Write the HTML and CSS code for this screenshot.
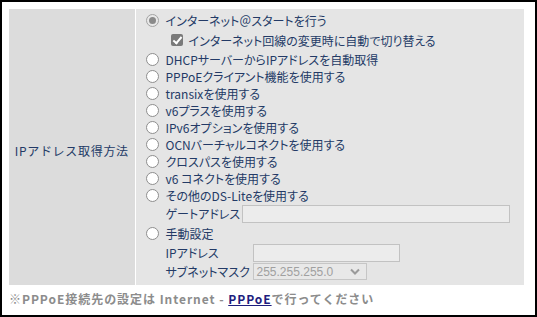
FILE: index.html
```html
<!DOCTYPE html>
<html lang="ja">
<head>
  <meta charset="UTF-8">
  <title>IPアドレス取得方法</title>
  <link rel="stylesheet" href="styles.css">
</head>
<body>
  <div class="frame">
    <table class="setting">
      <tr>
        <th>IPアドレス取得方法</th>
        <td>
          <div class="opt"><span class="radio on"></span>インターネット＠スタートを行う</div>
          <div class="opt sub"><span class="check"></span>インターネット回線の変更時に自動で切り替える</div>
          <div class="opt"><span class="radio"></span>DHCPサーバーからIPアドレスを自動取得</div>
          <div class="opt"><span class="radio"></span>PPPoEクライアント機能を使用する</div>
          <div class="opt"><span class="radio"></span>transixを使用する</div>
          <div class="opt"><span class="radio"></span>v6プラスを使用する</div>
          <div class="opt"><span class="radio"></span>IPv6オプションを使用する</div>
          <div class="opt"><span class="radio"></span>OCNバーチャルコネクトを使用する</div>
          <div class="opt"><span class="radio"></span>クロスパスを使用する</div>
          <div class="opt"><span class="radio"></span>v6 コネクトを使用する</div>
          <div class="opt"><span class="radio"></span>その他のDS-Liteを使用する</div>
          <div class="field gate"><label>ゲートアドレス</label><span class="text wide"></span></div>
          <div class="opt manual"><span class="radio"></span>手動設定</div>
          <div class="field"><label>IPアドレス</label><span class="text"></span></div>
          <div class="field mask">
            <label>サブネットマスク</label>
            <span class="select">255.255.255.0
              <svg width="10" height="7" viewBox="0 0 10 7"><path d="M1 1.5 L5 5.5 L9 1.5" fill="none" stroke="#9a9a9a" stroke-width="2"/></svg>
            </span>
          </div>
        </td>
      </tr>
    </table>
    <p class="note">※PPPoE接続先の設定は Internet - <a href="#">PPPoE</a>で行ってください</p>
  </div>
</body>
</html>
```

FILE: styles.css
```css
* {
  margin: 0;
  padding: 0;
  box-sizing: border-box;
}
body {
  width: 537px;
  height: 317px;
  font-family: "Noto Sans CJK JP", "Noto Sans", sans-serif;
  font-size: 12px;
  color: #233a66;
}
.frame {
  width: 537px;
  height: 317px;
  border: 2px solid #000;
  padding: 7px;
}
.setting {
  width: 515px;
  border-collapse: collapse;
}
.setting th {
  width: 126px;
  background: #dcdcdc;
  border-right: 1px solid #fff;
  font-weight: normal;
  text-align: center;
  letter-spacing: 0.7px;
  padding-top: 6px;
}
.setting td {
  background: #e5e5e5;
  padding: 3px 0 4px 10px;
  font-feature-settings: "palt";
}
.opt {
  display: flex;
  align-items: center;
  height: 17px;
  white-space: nowrap;
}
.opt.sub {
  height: 22px;
  padding-left: 25px;
}
.radio {
  width: 13px;
  height: 13px;
  margin-right: 7px;
  border: 1px solid #8e8e8e;
  border-radius: 50%;
  background: #fff;
  display: flex;
  align-items: center;
  justify-content: center;
}
.radio.on {
  border-color: #a3a3a3;
  background: #e8e8e8;
}
.radio.on::after {
  content: "";
  width: 7px;
  height: 7px;
  border-radius: 50%;
  background: #8a8a8a;
}
.check {
  width: 12px;
  height: 12px;
  margin-right: 6px;
  border-radius: 2px;
  background: #7a7a7a;
  position: relative;
}
.check::after {
  content: "";
  position: absolute;
  left: 4px;
  top: 1px;
  width: 3px;
  height: 7px;
  border: solid #fff;
  border-width: 0 2px 2px 0;
  transform: rotate(40deg);
}
.field {
  display: flex;
  align-items: center;
  height: 19px;
  padding-left: 20px;
}
.field label {
  width: 87px;
  white-space: nowrap;
}
.field.gate label {
  width: 76px;
}
.opt.manual {
  height: 20px;
}
.text {
  display: block;
  width: 147px;
  height: 18px;
  margin-top: 1px;
  background: #ececec;
  border: 1px solid #c2c2c2;
}
.text.wide {
  width: 268px;
}
.select {
  display: flex;
  align-items: center;
  justify-content: space-between;
  width: 114px;
  height: 17px;
  padding: 0 6px 0 3px;
  background: #e8e8e8;
  border: 1px solid #c6c6c6;
  color: #a0a0a0;
  font-family: "Liberation Sans", sans-serif;
  font-size: 12px;
}
.note {
  margin-top: 5px;
  line-height: 17px;
  font-weight: bold;
  letter-spacing: 0.95px;
  color: #8c8c8c;
}
.note a {
  color: #1d1d7e;
}
```
